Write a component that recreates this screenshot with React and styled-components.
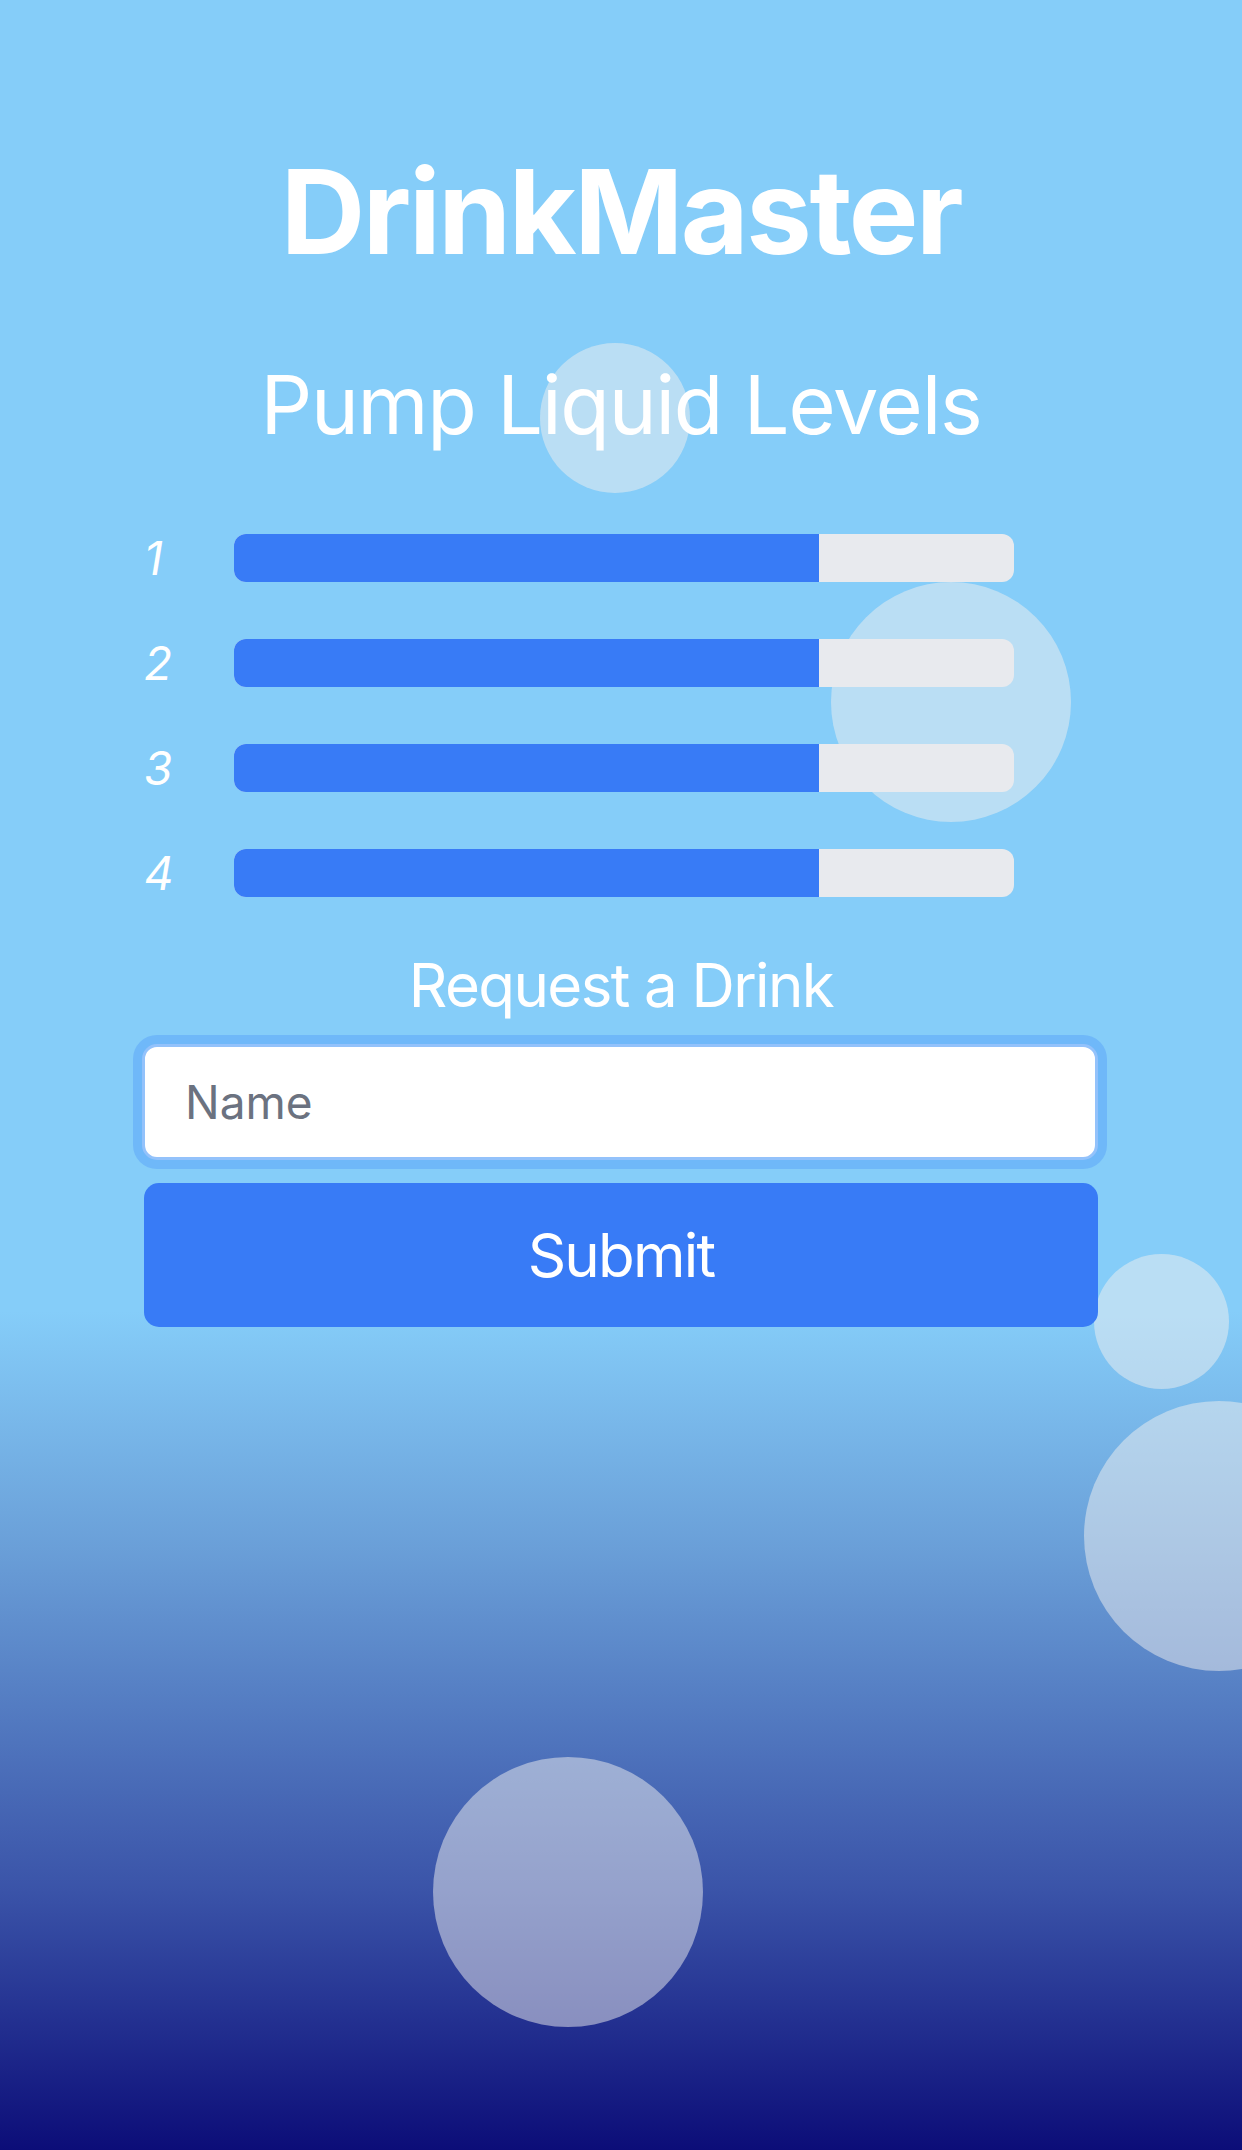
import React from 'react'
import styled, { createGlobalStyle } from 'styled-components'

const pumps = [
  { id: 1, level: 75 },
  { id: 2, level: 75 },
  { id: 3, level: 75 },
  { id: 4, level: 75 },
]

const bubbles = [
  { left: 540, top: 343, size: 150 },
  { left: 831, top: 582, size: 240 },
  { left: 1094, top: 1254, size: 135 },
  { left: 1084, top: 1401, size: 270 },
  { left: 433, top: 1757, size: 270 },
]

function App() {
  return (
    <>
      <GlobalStyle />
      <Page>
        {bubbles.map((b, i) => (
          <Bubble key={i} $left={b.left} $top={b.top} $size={b.size} />
        ))}
        <Content>
          <Title>DrinkMaster</Title>
          <Subtitle>Pump Liquid Levels</Subtitle>
          <Levels>
            {pumps.map((p) => (
              <LevelRow key={p.id}>
                <PumpLabel>{p.id}</PumpLabel>
                <Track>
                  <Fill style={{ width: `${p.level}%` }} />
                </Track>
              </LevelRow>
            ))}
          </Levels>
          <FormTitle>Request a Drink</FormTitle>
          <Form onSubmit={(e) => e.preventDefault()}>
            <NameInput placeholder="Name" />
            <SubmitButton type="submit">Submit</SubmitButton>
          </Form>
        </Content>
      </Page>
    </>
  )
}

export default App

const GlobalStyle = createGlobalStyle`
  * {
    box-sizing: border-box;
  }
  body {
    margin: 0;
    font-family: Inter, "Noto Sans", sans-serif;
  }
`

const Page = styled.div`
  position: relative;
  min-height: 2150px;
  overflow: hidden;
  background: linear-gradient(
    180deg,
    #85cdf9 0%,
    #85cdf9 61%,
    #6a9fd8 72%,
    #3a53a8 88%,
    #0c0d78 100%
  );
`

const Bubble = styled.div`
  position: absolute;
  left: ${(p) => p.$left}px;
  top: ${(p) => p.$top}px;
  width: ${(p) => p.$size}px;
  height: ${(p) => p.$size}px;
  border-radius: 50%;
  background: rgba(240, 240, 240, 0.5);
`

const Content = styled.div`
  position: relative;
  z-index: 1;
  display: flex;
  flex-direction: column;
  align-items: center;
  padding: 142px 144px 0;
  color: #ffffff;
`

const Title = styled.h1`
  margin: 0;
  font-size: 117px;
  line-height: 1.2;
  font-weight: 700;
  letter-spacing: -2.4px;
`

const Subtitle = styled.h2`
  margin: 75px 0 0;
  font-size: 81px;
  line-height: 1.2;
  font-weight: 400;
  letter-spacing: -1.2px;
`

const Levels = styled.div`
  align-self: stretch;
  display: flex;
  flex-direction: column;
  gap: 57px;
  margin-top: 79px;
`

const LevelRow = styled.div`
  display: flex;
  align-items: center;
  height: 48px;
`

const PumpLabel = styled.span`
  width: 90px;
  font-size: 46px;
  font-style: italic;
  line-height: 1;
`

const Track = styled.div`
  width: 780px;
  height: 48px;
  border-radius: 12px;
  overflow: hidden;
  background: #e8eaee;
`

const Fill = styled.div`
  height: 100%;
  background: #387bf6;
`

const FormTitle = styled.h3`
  margin: 52px 0 0;
  font-size: 60px;
  line-height: 1.2;
  font-weight: 400;
  letter-spacing: -1.6px;
`

const Form = styled.form`
  align-self: stretch;
  display: flex;
  flex-direction: column;
  gap: 23px;
  margin-top: 23px;
`

const NameInput = styled.input`
  width: 956px;
  height: 116px;
  margin-left: -2px;
  padding: 0 40px;
  border: 3px solid #93c2fb;
  border-radius: 15px;
  box-shadow: 0 0 0 9px #6fb8f9;
  background: #ffffff;
  font-family: Inter, "Noto Sans", sans-serif;
  font-size: 46px;
  color: #111827;
  outline: none;

  &::placeholder {
    color: #6b7280;
  }
`

const SubmitButton = styled.button`
  width: 954px;
  height: 144px;
  border: none;
  border-radius: 15px;
  background: #387bf6;
  color: #ffffff;
  font-family: Inter, "Noto Sans", sans-serif;
  font-size: 60px;
  letter-spacing: -1.8px;
  cursor: pointer;
`
